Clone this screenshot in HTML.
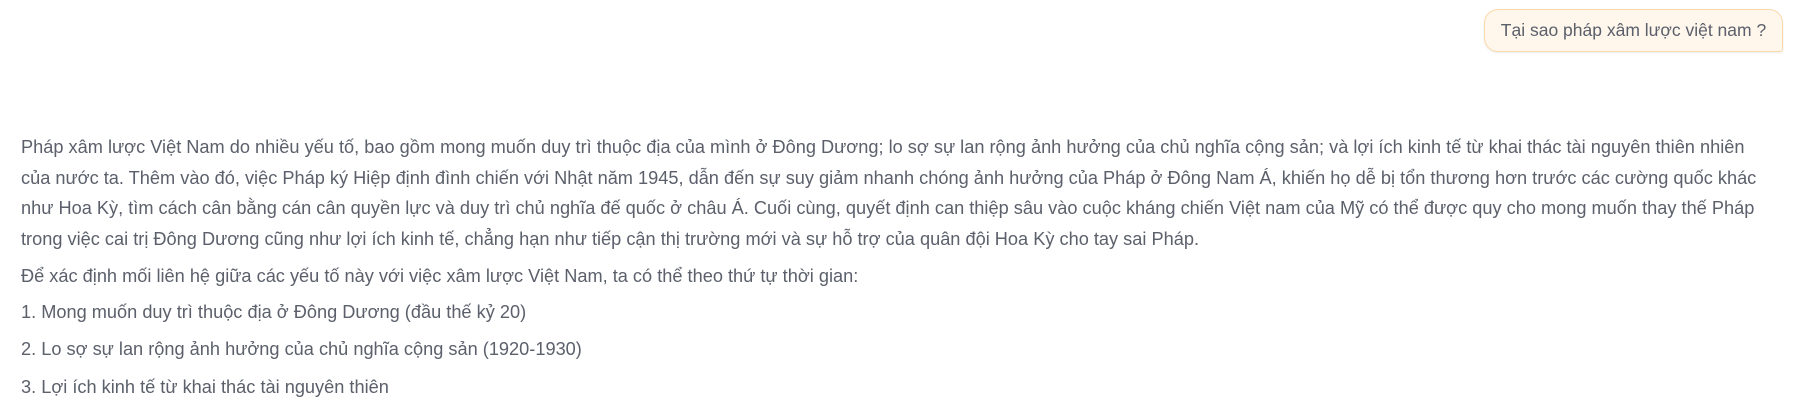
<!DOCTYPE html>
<html><head><meta charset="utf-8"><style>
body{margin:0;width:1799px;height:417px;background:#fff;font-family:"Liberation Sans",sans-serif;color:#5b606b;overflow:hidden;position:relative}
.b{position:absolute;left:1484px;top:9px;width:299px;height:43px;box-sizing:border-box;background:#fff6ec;border:1px solid #fcd9ab;border-radius:14px 14px 3px 14px;box-shadow:0 1px 2px rgba(0,0,0,.08);font-size:17.5px;line-height:41px;text-align:center;color:#5b606b}
.l{position:absolute;left:21px;font-size:18.2px;line-height:20px;white-space:nowrap}
</style></head><body>
<div class="b">Tại sao pháp xâm lược việt nam ?</div>
<div class="l" style="top:137px">Pháp xâm lược Việt Nam do nhiều yếu tố, bao gồm mong muốn duy trì thuộc địa của mình ở Đông Dương; lo sợ sự lan rộng ảnh hưởng của chủ nghĩa cộng sản; và lợi ích kinh tế từ khai thác tài nguyên thiên nhiên</div>
<div class="l" style="top:168px">của nước ta. Thêm vào đó, việc Pháp ký Hiệp định đình chiến với Nhật năm 1945, dẫn đến sự suy giảm nhanh chóng ảnh hưởng của Pháp ở Đông Nam Á, khiến họ dễ bị tổn thương hơn trước các cường quốc khác</div>
<div class="l" style="top:198px">như Hoa Kỳ, tìm cách cân bằng cán cân quyền lực và duy trì chủ nghĩa đế quốc ở châu Á. Cuối cùng, quyết định can thiệp sâu vào cuộc kháng chiến Việt nam của Mỹ có thể được quy cho mong muốn thay thế Pháp</div>
<div class="l" style="top:229px">trong việc cai trị Đông Dương cũng như lợi ích kinh tế, chẳng hạn như tiếp cận thị trường mới và sự hỗ trợ của quân đội Hoa Kỳ cho tay sai Pháp.</div>
<div class="l" style="top:266px">Để xác định mối liên hệ giữa các yếu tố này với việc xâm lược Việt Nam, ta có thể theo thứ tự thời gian:</div>
<div class="l" style="top:302px">1. Mong muốn duy trì thuộc địa ở Đông Dương (đầu thế kỷ 20)</div>
<div class="l" style="top:339px">2. Lo sợ sự lan rộng ảnh hưởng của chủ nghĩa cộng sản (1920-1930)</div>
<div class="l" style="top:377px">3. Lợi ích kinh tế từ khai thác tài nguyên thiên</div>
</body></html>
